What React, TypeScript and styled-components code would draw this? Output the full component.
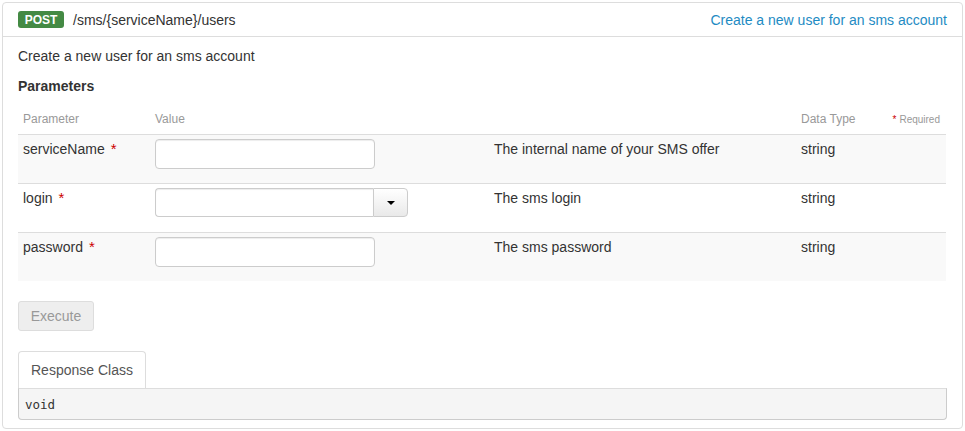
import React from "react";
import styled, { createGlobalStyle } from "styled-components";

const Global = createGlobalStyle`
  html, body { margin: 0; padding: 0; background: #fff; }
  body { font-family: "Liberation Sans", Arial, sans-serif; font-size: 14px; color: #333; }
  * { box-sizing: border-box; }
`;

const Panel = styled.div`
  margin: 2px;
  border: 1px solid #ddd;
  border-radius: 4px;
  background: #fff;
`;

const Header = styled.div`
  height: 34px;
  display: flex;
  align-items: center;
  padding: 0 15px;
  border-bottom: 1px solid #ddd;
`;

const Badge = styled.span`
  display: inline-flex;
  align-items: center;
  justify-content: center;
  width: 46px;
  height: 17px;
  background: #448a44;
  color: #fff;
  font-weight: bold;
  font-size: 12px;
  border-radius: 3px;
  margin-right: 9px;
`;

const Path = styled.span`
  font-size: 14px;
  color: #333;
  flex: 1;
`;

const Summary = styled.a`
  color: #1e8bc3;
  text-decoration: none;
  font-size: 14px;
`;

const Body = styled.div`
  padding: 9px 15px 8px;
`;

const Text = styled.p`
  margin: 0;
  line-height: 20px;
`;

const Title = styled.h4`
  margin: 10px 0 8px;
  font-size: 14px;
  line-height: 20px;
  font-weight: bold;
`;

const Grid = styled.div`
  display: grid;
  grid-template-columns: 132px 339px 307px 84px 66px;
`;

const HeadCell = styled.div<{ $right?: boolean }>`
  height: 30px;
  display: flex;
  align-items: center;
  justify-content: ${(p) => (p.$right ? "flex-end" : "flex-start")};
  padding: 0 ${(p) => (p.$right ? "6px" : "5px")} 0 5px;
  font-size: ${(p) => (p.$right ? "10px" : "12px")};
  color: #999;
`;

const Req = styled.span`
  color: #c00;
  margin-right: 3px;
`;

const Cell = styled.div<{ $odd: boolean }>`
  height: 49px;
  border-top: 1px solid #ddd;
  background: ${(p) => (p.$odd ? "#f9f9f9" : "#fff")};
  padding: 4px 5px;
  line-height: 20px;
  font-size: 14px;
`;

const Star = styled.span`
  color: #c00;
  margin-left: 6px;
  font-size: 15px;
`;

const Input = styled.input`
  display: block;
  width: 220px;
  height: 30px;
  border: 1px solid #ccc;
  border-radius: 4px;
  background: #fff;
  box-shadow: inset 0 1px 1px rgba(0,0,0,0.075);
  font: inherit;
  padding: 4px 8px;
`;

const Combo = styled.div`
  display: flex;
  width: 253px;
  height: 29px;
  margin-top: 0;
`;

const ComboInput = styled.input`
  flex: 1;
  min-width: 0;
  height: 100%;
  border: 1px solid #ccc;
  border-right: none;
  border-radius: 4px 0 0 4px;
  box-shadow: inset 0 1px 1px rgba(0,0,0,0.075);
  font: inherit;
  padding: 4px 8px;
`;

const Caret = styled.button`
  width: 35px;
  height: 100%;
  border: 1px solid #ccc;
  border-radius: 0 4px 4px 0;
  background: linear-gradient(#fff, #e9e9e9);
  display: flex;
  align-items: center;
  justify-content: center;
  padding: 0;
  &::after {
    content: "";
    border-left: 4px solid transparent;
    border-right: 4px solid transparent;
    border-top: 4px solid #000;
  }
`;

const Execute = styled.button`
  margin-top: 20px;
  width: 76px;
  height: 30px;
  background: #eee;
  border: 1px solid #ddd;
  border-radius: 3px;
  color: #999;
  font: inherit;
  font-size: 14px;
`;

const Tabs = styled.div`
  margin-top: 20px;
  display: flex;
`;

const Tab = styled.div`
  height: 37px;
  padding: 0 12px;
  display: flex;
  align-items: center;
  border: 1px solid #ddd;
  border-bottom: none;
  border-radius: 4px 4px 0 0;
  background: #fff;
  color: #555;
  font-size: 14px;
`;

const Pre = styled.pre`
  margin: 0;
  height: 32px;
  border: 1px solid #ccc;
  border-top-color: #ddd;
  border-radius: 0 0 4px 4px;
  background: #f5f5f5;
  padding: 0 6px;
  display: flex;
  align-items: center;
  font-family: "DejaVu Sans Mono", "Liberation Mono", monospace;
  font-size: 12.5px;
  color: #333;
`;

const params = [
  { name: "serviceName", desc: "The internal name of your SMS offer", kind: "input" },
  { name: "login", desc: "The sms login", kind: "select" },
  { name: "password", desc: "The sms password", kind: "input" },
];

export default function App() {
  return (
    <>
      <Global />
      <Panel>
        <Header>
          <Badge>POST</Badge>
          <Path>/sms/{"{serviceName}"}/users</Path>
          <Summary href="#">Create a new user for an sms account</Summary>
        </Header>
        <Body>
          <Text>Create a new user for an sms account</Text>
          <Title>Parameters</Title>
          <Grid>
            <HeadCell>Parameter</HeadCell>
            <HeadCell>Value</HeadCell>
            <HeadCell />
            <HeadCell>Data Type</HeadCell>
            <HeadCell $right>
              <Req>*</Req>Required
            </HeadCell>
            {params.map((p, i) => {
              const odd = i % 2 === 0;
              return (
                <React.Fragment key={p.name}>
                  <Cell $odd={odd}>
                    {p.name}
                    <Star>*</Star>
                  </Cell>
                  <Cell $odd={odd}>
                    {p.kind === "input" ? (
                      <Input type={p.name === "password" ? "password" : "text"} />
                    ) : (
                      <Combo>
                        <ComboInput type="text" />
                        <Caret type="button" />
                      </Combo>
                    )}
                  </Cell>
                  <Cell $odd={odd}>{p.desc}</Cell>
                  <Cell $odd={odd}>string</Cell>
                  <Cell $odd={odd} />
                </React.Fragment>
              );
            })}
          </Grid>
          <Execute type="button">Execute</Execute>
          <Tabs>
            <Tab>Response Class</Tab>
          </Tabs>
          <Pre>void</Pre>
        </Body>
      </Panel>
    </>
  );
}
